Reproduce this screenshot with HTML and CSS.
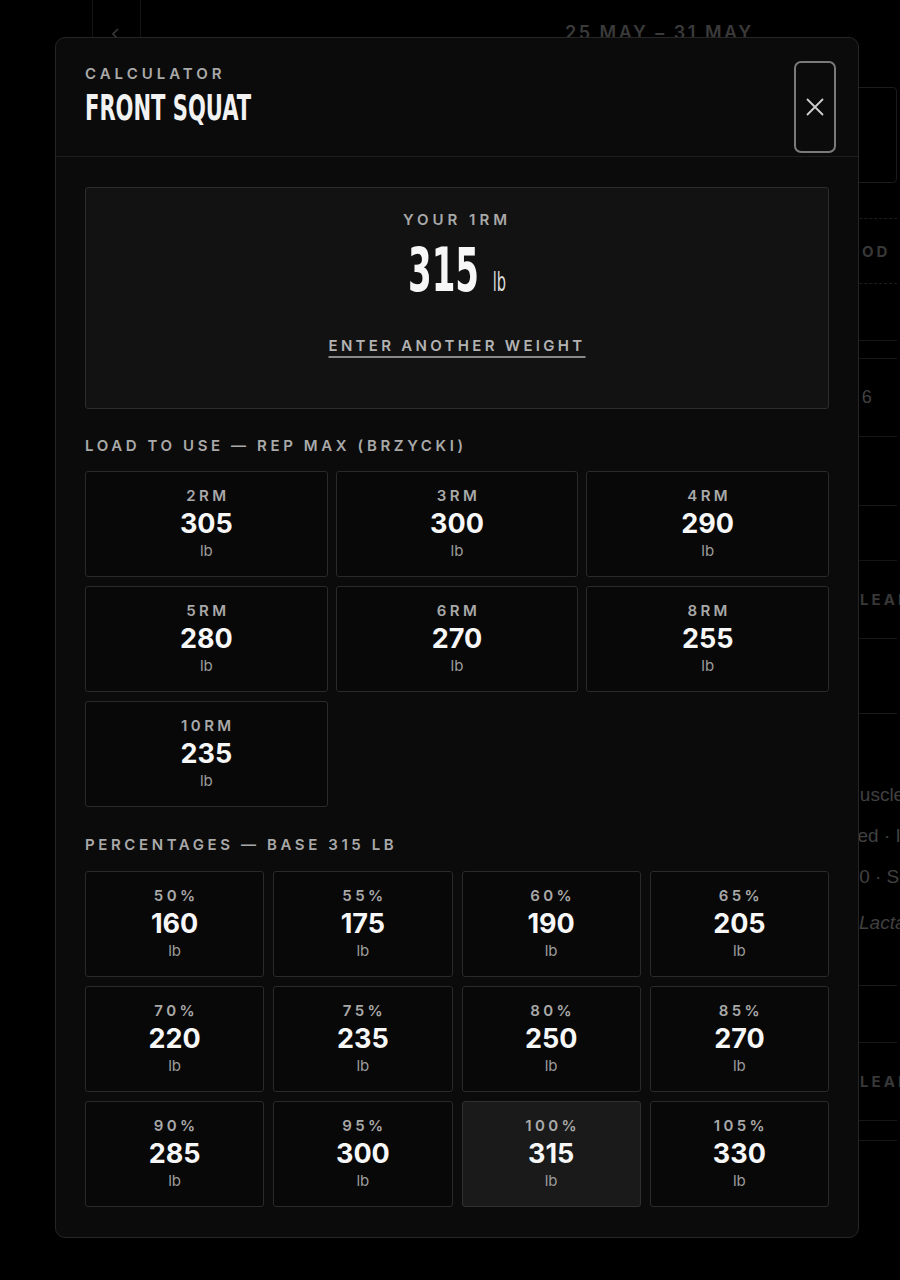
FILE: index.html
```html
<!DOCTYPE html>
<html lang="en">
<head>
    <meta charset="UTF-8">
    <meta name="viewport" content="width=device-width, initial-scale=1.0">
    <title>Front Squat Calculator</title>
    <link rel="stylesheet" href="styles.css">
</head>
<body>

<!-- Week view behind the dialog -->
<div class="app">
    <div class="topbar">
        <div class="back-btn">
            <svg width="10" height="14" viewBox="0 0 10 14"><path d="M7 2 L2 7 L7 12" fill="none" stroke="#3c3c3c" stroke-width="1.5"/></svg>
        </div>
        <div class="week-title">25 MAY – 31 MAY</div>
    </div>
    <div class="feed">
        <div class="feed-card"></div>
        <div class="feed-row dashed"><span class="feed-caps pad-period">PERIOD</span></div>
        <div class="feed-gap"></div>
        <div class="feed-row day"><span class="feed-text pad-day">Week 6</span></div>
        <div class="feed-gap second"></div>
        <div class="feed-row action"><span class="feed-caps pad-clear">CLEAR</span></div>
        <div class="feed-gap third"></div>
        <div class="feed-notes">
            <div class="feed-text pad-muscle">Muscle</div>
            <div class="feed-text pad-mixed">Mixed · Intervals</div>
            <div class="feed-text pad-sets">120 · Sets</div>
            <div class="feed-text italic pad-lact">Lactate</div>
        </div>
        <div class="feed-gap fourth"></div>
        <div class="feed-row action"><span class="feed-caps pad-clear">CLEAR</span></div>
        <div class="feed-gap last"></div>
    </div>
</div>

<!-- Calculator dialog -->
<div class="modal">
    <div class="modal-header">
        <div class="modal-titles">
            <div class="eyebrow">CALCULATOR</div>
            <h1 class="modal-title"><span>FRONT SQUAT</span></h1>
        </div>
        <button class="close-btn" type="button" aria-label="Close">
            <svg width="18" height="18" viewBox="0 0 18 18"><path d="M1 1 L17 17 M17 1 L1 17" stroke="#cfcfcf" stroke-width="1.8"/></svg>
        </button>
    </div>

    <div class="modal-body">
        <div class="onerm-box">
            <div class="caps-label">YOUR 1RM</div>
            <div class="onerm-value"><span class="onerm-num">315</span><span class="onerm-unit">lb</span></div>
            <a class="link-btn" href="#">ENTER ANOTHER WEIGHT</a>
        </div>

        <div class="section-label">LOAD TO USE — REP MAX (BRZYCKI)</div>
        <div class="tile-grid three" id="repGrid"></div>

        <div class="section-label">PERCENTAGES — BASE 315 LB</div>
        <div class="tile-grid four" id="pctGrid"></div>
    </div>
</div>

<script>
    const oneRm = 315;
    const reps = [2, 3, 4, 5, 6, 8, 10];

    // Brzycki: load = 1RM * (37 - reps) / 36, rounded to 5 lb
    function roundFive(n) {
        return Math.round(n / 5) * 5;
    }

    function makeTile(label, value, current) {
        const tile = document.createElement('div');
        tile.className = current ? 'tile current' : 'tile';
        tile.innerHTML =
            '<div class="tile-label">' + label + '</div>' +
            '<div class="tile-value">' + value + '</div>' +
            '<div class="tile-unit">lb</div>';
        return tile;
    }

    const repGrid = document.querySelector('#repGrid');
    reps.forEach(r => {
        repGrid.appendChild(makeTile(r + 'RM', roundFive(oneRm * (37 - r) / 36), false));
    });

    const pctGrid = document.querySelector('#pctGrid');
    for (let p = 50; p <= 105; p += 5) {
        pctGrid.appendChild(makeTile(p + '%', roundFive(oneRm * p / 100), p === 100));
    }
</script>

</body>
</html>
```

FILE: styles.css
```css
* {
    box-sizing: border-box;
}
body {
    margin: 0;
    height: 1280px;
    overflow: hidden;
    background-color: #000;
    font-family: Inter, "Noto Sans", sans-serif;
    color: #f2f2f2;
}

/* ---- page behind the dialog ---- */
.app {
    position: relative;
    height: 1280px;
}
.topbar {
    display: flex;
    height: 70px;
    padding-left: 92px;
}
.back-btn {
    width: 49px;
    border-left: 1px solid #141414;
    border-right: 1px solid #141414;
    padding: 25px 0 0 18px;
}
.week-title {
    margin: 22px 0 0 424px;
    font-size: 18px;
    font-weight: 600;
    letter-spacing: 2.5px;
    color: #3a3a3a;
}
.feed {
    margin-left: 800px;
    width: 97px;
}
.feed-card {
    margin-top: 17px;
    margin-left: 20px;
    height: 96px;
    border: 1px solid #1c1c1c;
    border-radius: 4px;
}
.feed-row {
    display: flex;
    align-items: center;
    white-space: nowrap;
}
.feed-row.dashed {
    margin-top: 35px;
    height: 66px;
    border-top: 1px dashed #1c1c1c;
    border-bottom: 1px dashed #1c1c1c;
}
.feed-gap {
    margin-top: 56px;
    height: 19px;
    border-top: 1px solid #171717;
    border-bottom: 1px solid #171717;
}
.feed-row.day {
    height: 78px;
    border-bottom: 1px solid #171717;
}
.feed-gap.second {
    margin-top: 68px;
    height: 56px;
    border-bottom-color: #141414;
}
.feed-row.action {
    height: 77px;
}
.feed-gap.third {
    margin-top: 0;
    height: 76px;
    border-bottom: 1px solid #1a1a1a;
}
.feed-notes {
    padding-top: 70px;
    height: 272px;
    border-bottom: 1px solid #1a1a1a;
    white-space: nowrap;
}
.feed-notes .feed-text {
    height: 41px;
    font-size: 19px;
}
.feed-notes .feed-text.italic {
    margin-top: 5px;
}
.feed-gap.fourth {
    margin-top: 56px;
    height: 0;
    border-bottom: none;
}
.feed-gap.last {
    margin-top: 0;
    height: 21px;
}
.feed-caps {
    font-size: 15px;
    font-weight: 700;
    letter-spacing: 3px;
    color: #383838;
}
.feed-text {
    font-family: "Liberation Sans", Arial, sans-serif;
    font-size: 18px;
    color: #404040;
}
.feed-text.italic {
    font-style: italic;
}
.pad-period { padding-left: 17px; }
.pad-day { padding-left: 11px; }
.pad-clear { padding-left: 46px; }
.pad-muscle { padding-left: 44px; }
.pad-mixed { padding-left: 28px; }
.pad-sets { padding-left: 38px; }
.pad-lact { padding-left: 59px; }

/* ---- dialog ---- */
.modal {
    position: absolute;
    top: 37px;
    left: 55px;
    width: 804px;
    background-color: #0b0b0b;
    border: 1px solid #262626;
    border-radius: 10px;
}
.modal-header {
    display: flex;
    justify-content: space-between;
    padding: 23px 22px 3px 29px;
    border-bottom: 1px solid #1e1e1e;
}
.modal-titles {
    padding-top: 3px;
}
.eyebrow {
    font-size: 15px;
    line-height: 20px;
    font-weight: 600;
    letter-spacing: 4px;
    color: #a9a9a9;
}
.modal-title {
    margin: 4px 0 0;
    height: 40px;
    font-family: "DejaVu Sans Condensed", "DejaVu Sans", sans-serif;
    font-stretch: condensed;
    font-size: 36px;
    line-height: 40px;
    font-weight: 700;
    white-space: nowrap;
}
.modal-title span {
    display: inline-block;
    transform: scaleX(0.65);
    transform-origin: left center;
}
.close-btn {
    width: 42px;
    height: 92px;
    padding: 0;
    display: flex;
    align-items: center;
    justify-content: center;
    background-color: #0b0b0b;
    border: 2px solid #7a7a7a;
    border-radius: 7px;
    cursor: pointer;
}

.modal-body {
    padding: 30px 29px 30px;
}
.onerm-box {
    padding: 22px 0 52px;
    text-align: center;
    background-color: #121212;
    border: 1px solid #2c2c2c;
    border-radius: 3px;
}
.caps-label {
    font-size: 15px;
    line-height: 20px;
    font-weight: 600;
    letter-spacing: 4px;
    color: #a9a9a9;
}
.onerm-value {
    display: inline-block;
    margin-top: 10px;
    height: 60px;
    line-height: 60px;
    font-family: "DejaVu Sans Condensed", "DejaVu Sans", sans-serif;
    font-stretch: condensed;
    white-space: nowrap;
    transform: scaleX(0.62);
}
.onerm-num {
    font-size: 61px;
    font-weight: 700;
    color: #f7f7f7;
}
.onerm-unit {
    margin-left: 22px;
    font-size: 26px;
    color: #dcdcdc;
}
.link-btn {
    display: block;
    width: max-content;
    margin: 36px auto 0;
    font-size: 15px;
    line-height: 20px;
    font-weight: 600;
    letter-spacing: 3.3px;
    color: #b3b3b3;
    text-decoration: underline;
    text-decoration-thickness: 2px;
    text-underline-offset: 5px;
    text-decoration-color: #8a8a8a;
}

.section-label {
    margin: 27px 0 15px;
    font-size: 15px;
    line-height: 20px;
    font-weight: 600;
    letter-spacing: 3.6px;
    color: #a9a9a9;
}
.tile-grid + .section-label {
    margin: 28px 0 16px;
}
.tile-grid {
    display: grid;
    gap: 9px 8px;
}
.tile-grid.three {
    grid-template-columns: repeat(3, 1fr);
}
.tile-grid.four {
    grid-template-columns: repeat(4, 1fr);
    gap: 9px;
}
.tile {
    height: 106px;
    padding-top: 15px;
    text-align: center;
    background-color: #080808;
    border: 1px solid #2a2a2a;
    border-radius: 3px;
}
.tile.current {
    background-color: #1a1a1a;
    border-color: #303030;
}
.tile-label {
    font-size: 15px;
    line-height: 18px;
    font-weight: 600;
    letter-spacing: 3.4px;
    padding-left: 3px;
    color: #a9a9a9;
}
.tile-value {
    font-size: 27px;
    line-height: 38px;
    font-weight: 700;
    color: #f7f7f7;
}
.tile-unit {
    font-size: 15px;
    line-height: 16px;
    color: #9c9c9c;
}
```
